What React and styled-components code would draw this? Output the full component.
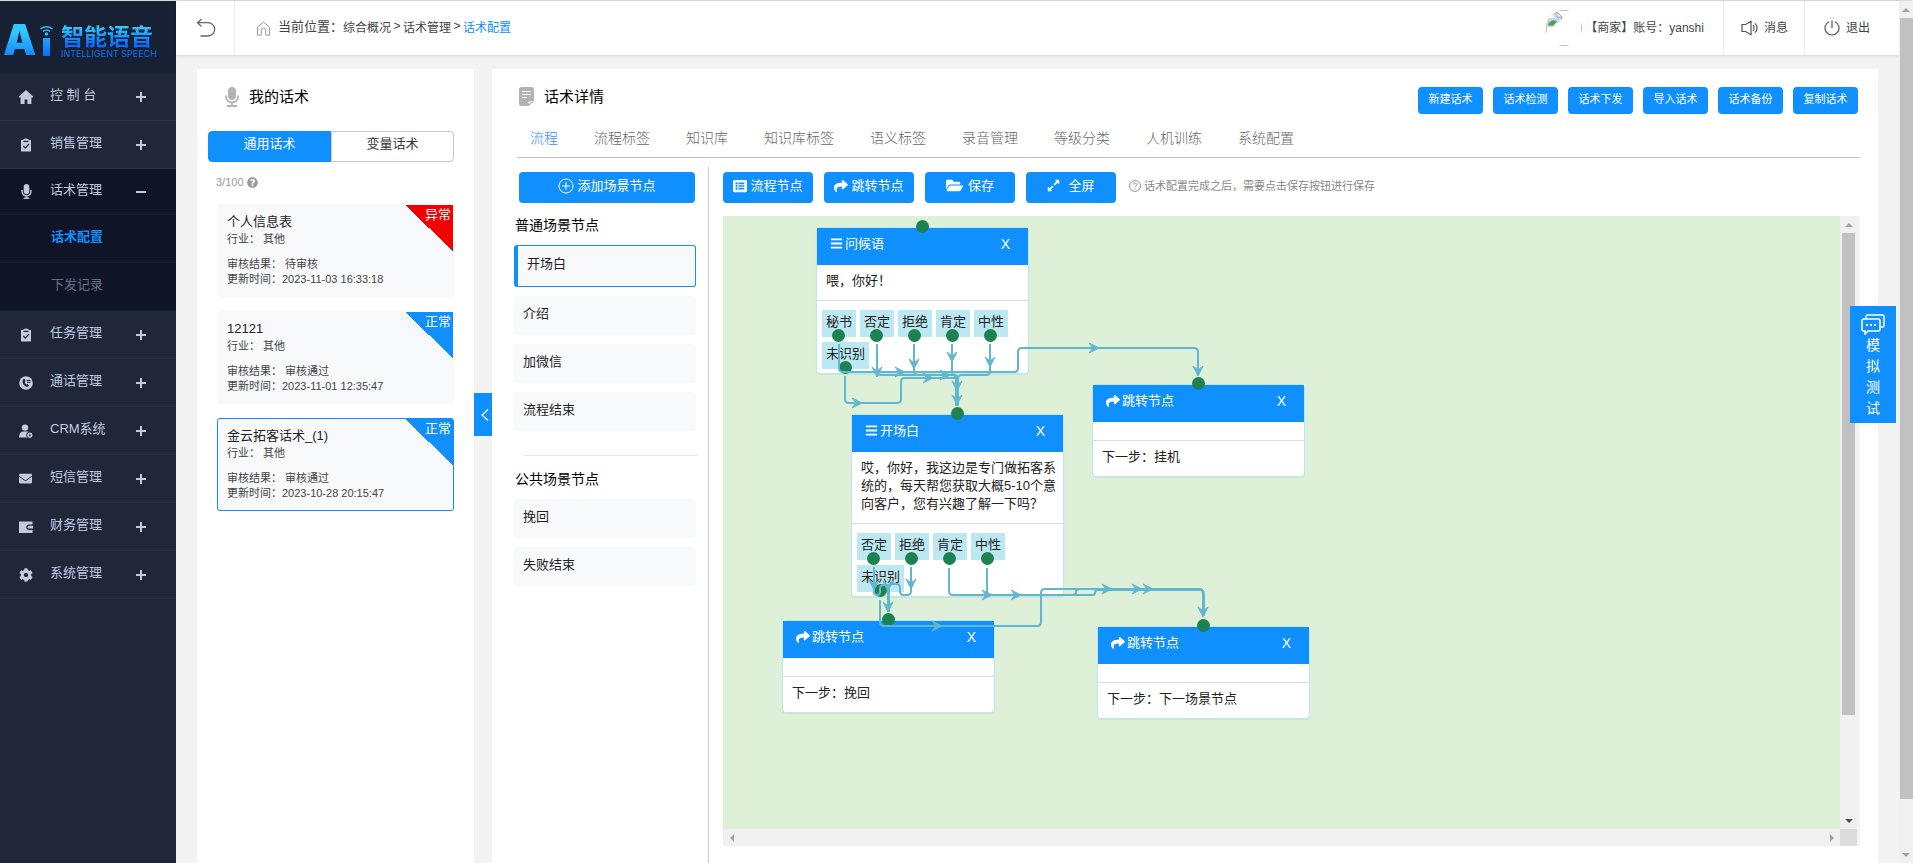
import React from "react";
import styled, { createGlobalStyle, css } from "styled-components";
import {
  FaBars,
  FaCog,
  FaEnvelope,
  FaExpandAlt,
  FaFolderOpen,
  FaListAlt,
  FaMicrophone,
  FaQuestionCircle,
  FaShare,
} from "react-icons/fa";

const BLUE = "#1090ff";
const LINK = "#61b7cf";
const DOT = "#1e8151";

const GlobalStyle = createGlobalStyle`
  *, *::before, *::after { box-sizing: border-box; }
  html, body { margin: 0; height: 100%; }
  body {
    font-family: "Liberation Sans", "Noto Sans CJK SC", sans-serif;
    font-size: 13px;
    line-height: 18px;
    color: #222;
    background: #f3f3f3;
    overflow: hidden;
  }
  button { font: inherit; border: 0; padding: 0; margin: 0; background: none; cursor: pointer; }
  a { color: inherit; text-decoration: none; }
  h1, h2, h3, p, ul { margin: 0; padding: 0; font-weight: 400; }
  ul { list-style: none; }
  svg { display: block; flex: none; }
`;

const Page = styled.div`
  display: flex;
  height: 100vh;
  border-top: 1px solid #dadada;
`;

/* ---------- sidebar ---------- */

const Sidebar = styled.aside`
  flex: none;
  width: 176px;
  background: #1f2739;
  color: #c3cbe0;
`;

const Logo = styled.div`
  display: flex;
  height: 72px;
  padding: 21px 0 0 3px;
  background: #182033;
`;

const gradientText = css`
  color: transparent;
  background: linear-gradient(#30c8ff 20%, #0a6cff 85%);
  background-clip: text;
  -webkit-background-clip: text;
`;

const LogoLetter = styled.span`
  ${gradientText}
  width: 37px;
  font: 900 42px/36px Inter, sans-serif;
`;

const LogoWords = styled.div`
  padding: 0 0 0 8px;
`;

const LogoName = styled.div`
  ${gradientText}
  font: 700 23px/26px "Noto Sans CJK SC", sans-serif;
`;

const LogoSub = styled.div`
  padding-top: 2px;
  color: #0f6fe8;
  font: 400 9px/8px Inter, sans-serif;
  white-space: nowrap;
`;

const NavItem = styled.button`
  display: grid;
  grid-template-columns: 14px 1fr 10px;
  column-gap: 17px;
  align-items: center;
  width: 100%;
  height: ${(p) => (p.$open ? 46 : 48)}px;
  padding: 0 30px 0 19px;
  text-align: left;
  color: inherit;
  background: ${(p) => (p.$open ? "#0f1526" : "transparent")};
  border-bottom: 1px solid ${(p) => (p.$open ? "#182033" : "#2a3243")};
`;

const NavLabel = styled.span`
  padding-bottom: 3px;
  white-space: nowrap;
`;

const SubLink = styled.a`
  display: block;
  height: 48px;
  padding: 0 0 0 51px;
  line-height: 44px;
  background: #0f1526;
  border-bottom: 1px solid #182033;
  color: ${(p) => (p.$active ? BLUE : "#66708a")};
  font-weight: ${(p) => (p.$active ? 700 : 400)};
`;

/* ---------- header ---------- */

const Main = styled.div`
  flex: 1;
  min-width: 0;
  display: flex;
  flex-direction: column;
`;

const Header = styled.header`
  display: flex;
  flex: none;
  height: 54px;
  background: #fff;
  box-shadow: 0 1px 3px rgba(0, 0, 0, 0.12);
  font-size: 12px;
  color: #444;
`;

const BackButton = styled.button`
  display: flex;
  align-items: center;
  width: 59px;
  padding-left: 20px;
  border-right: 1px solid #ececec;
`;

const Crumbs = styled.nav`
  display: flex;
  flex: 1;
  align-items: center;
  padding-left: 21px;
`;

const CrumbTitle = styled.span`
  padding: 0 0 2px 7px;
  font-size: 13px;
`;

const CrumbLink = styled.a`
  color: ${(p) => (p.$active ? BLUE : "inherit")};
`;

const CrumbArrow = styled.span`
  width: 12px;
  padding-bottom: 4px;
  text-align: center;
`;

const Account = styled.div`
  display: flex;
  align-items: center;
  gap: 3px;
  padding-right: 19px;
`;

const Avatar = styled.span`
  width: 36px;
  height: 36px;
  border-radius: 50%;
  overflow: hidden;
`;

const AvatarFrame = styled.span`
  display: block;
  height: 100%;
  border: 1px solid #b8b8b8;
`;

const HeaderAction = styled.button`
  display: flex;
  align-items: center;
  gap: 6px;
  padding: ${(p) => (p.$last ? "0 29px 0 19px" : "0 16px 0 17px")};
  border-left: 1px solid #ececec;
  color: inherit;
`;

/* ---------- panels ---------- */

const Content = styled.main`
  display: flex;
  flex: 1;
  min-height: 0;
  padding: 14px 21px 0;
`;

const ScriptPanel = styled.section`
  flex: none;
  width: 277px;
  padding: 18px 20px 0 11px;
  background: #fff;
`;

const PanelTitle = styled.h2`
  display: flex;
  gap: 10px;
  color: #000;
  font-size: 15px;
  line-height: 20px;
`;

const ScriptTitle = styled(PanelTitle)`
  padding-left: 17px;
`;

const Segments = styled.div`
  display: flex;
  height: 31px;
  margin-top: 24px;
`;

const Segment = styled.button`
  flex: 1;
  padding-bottom: 5px;
  border: 1px solid ${(p) => (p.$active ? BLUE : "#c8c8c8")};
  border-radius: ${(p) => (p.$active ? "4px 0 0 4px" : "0 4px 4px 0")};
  color: ${(p) => (p.$active ? "#fff" : "#333")};
  background: ${(p) => (p.$active ? BLUE : "#fff")};
`;

const Quota = styled.p`
  display: flex;
  align-items: center;
  gap: 3px;
  padding: 11px 0 13px 8px;
  color: #999;
  font-size: 11px;
`;

const CardList = styled.ul`
  display: grid;
  gap: 14px;
  padding-left: 9px;
`;

const Card = styled.li`
  position: relative;
  height: 93px;
  padding: 7px 9px;
  border: 1px solid ${(p) => (p.$active ? BLUE : "#f8f9fb")};
  border-radius: 3px;
  background: #f8f9fb;
  color: #444;
  font-size: 11px;
  line-height: 15px;
  white-space: pre;
`;

const CardTitle = styled.h3`
  font-size: 13px;
  line-height: 20px;
  color: #222;
`;

const CardField = styled.p`
  margin-top: ${(p) => (p.$spaced ? 10 : 0)}px;
`;

const Ribbon = styled.span`
  position: absolute;
  top: 0;
  right: 0;
  width: 48px;
  height: 46px;
  padding-right: 2px;
  color: #fff;
  font-size: 13px;
  line-height: 20px;
  text-align: right;
  background: linear-gradient(to top right, transparent 50%, ${(p) => p.$color} 50%);
`;

const Collapse = styled.button`
  display: flex;
  flex: none;
  align-items: center;
  justify-content: center;
  width: 18px;
  height: 43px;
  padding-left: 3px;
  margin-top: 324px;
  background: ${BLUE};
`;

const DetailPanel = styled.section`
  display: flex;
  flex: 1;
  flex-direction: column;
  min-width: 0;
  padding: 18px 18px 0 22px;
  background: #fff;
`;

const DetailHead = styled.div`
  display: flex;
  justify-content: space-between;
  height: 27px;
  padding: 0 2px 0 5px;
`;

const HeadActions = styled.div`
  display: flex;
  gap: 10px;
`;

const blueButton = css`
  color: #fff;
  background: ${BLUE};
  border-radius: 4px;
`;

const SmallButton = styled.button`
  ${blueButton}
  width: 65px;
  padding-bottom: 3px;
  font-size: 11px;
`;

const Tabs = styled.nav`
  display: flex;
  gap: 36px;
  margin-left: 3px;
  padding: 14px 0 9px 13px;
  border-bottom: 1px solid #c0c0c0;
  font-size: 14px;
  font-weight: 300;
  line-height: 20px;
`;

const Tab = styled.a`
  color: ${(p) => (p.$active ? "#3d8bff" : "#666")};
`;

const DetailBody = styled.div`
  display: flex;
  flex: 1;
  min-height: 0;
  padding-top: 9px;
`;

const SceneColumn = styled.div`
  flex: none;
  width: 195px;
  padding: 5px 12px 0 0;
  border-right: 1px solid #c8c8c8;
`;

const ToolButton = styled.button`
  ${blueButton}
  display: flex;
  align-items: center;
  justify-content: center;
  gap: ${(p) => p.$gap || 3}px;
  width: ${(p) => p.$width || "90px"};
  height: 31px;
  padding-bottom: 4px;
`;

const AddRow = styled.div`
  padding: 0 1px 0 5px;
`;

const SceneHeading = styled.h3`
  padding: ${(p) => (p.$first ? "12px 0 10px 1px" : "13px 0 10px 1px")};
  color: #000;
  font-size: 14px;
  line-height: 20px;
`;

const SceneList = styled.ul`
  display: grid;
  gap: 9px;
`;

const Scene = styled.li`
  height: ${(p) => (p.$active ? 42 : 39)}px;
  padding: 9px;
  border-radius: 3px;
  background: #f8f9fb;
  ${(p) =>
    p.$active &&
    css`
      border: 1px solid ${BLUE};
      border-left-width: 4px;
    `}
`;

const SceneDivider = styled.hr`
  height: 1px;
  margin: 24px -2px 0 10px;
  border: 0;
  background: #e6e6e6;
`;

const FlowColumn = styled.div`
  display: flex;
  flex: 1;
  flex-direction: column;
  min-width: 0;
  padding: 5px 0 17px 14px;
`;

const Toolbar = styled.div`
  display: flex;
  align-items: center;
  gap: 11px;
  padding-bottom: 13px;
`;

const Hint = styled.p`
  display: flex;
  align-items: center;
  gap: 3px;
  padding: 0 0 3px 2px;
  color: #888;
  font-size: 11px;
`;

/* ---------- flow canvas ---------- */

const CanvasFrame = styled.div`
  display: grid;
  flex: 1;
  grid-template-columns: 1fr 17px;
  grid-template-rows: 1fr 17px;
  min-height: 0;
  padding-right: 3px;
  background: linear-gradient(#f3f3f3, #f3f3f3) right / 3px 100% no-repeat;
`;

const Canvas = styled.div`
  position: relative;
  overflow: hidden;
  background: #def0d8;
`;

const Corner = styled.div`
  background: #dcdcdc;
`;

const FlowNode = styled.article`
  position: absolute;
  left: ${(p) => p.$x}px;
  top: ${(p) => p.$y}px;
  width: 213px;
  border: 1px solid #bce8f1;
  border-radius: 4px;
  background: #fff;
  box-shadow: 0 1px 1px rgba(0, 0, 0, 0.05);

  &::before {
    content: "";
    position: absolute;
    top: -8px;
    left: 99px;
    width: 13px;
    height: 13px;
    border-radius: 50%;
    background: ${DOT};
  }
`;

const NodeHead = styled.header`
  display: flex;
  align-items: center;
  gap: 2px;
  height: 37px;
  padding: 0 18px 6px 13px;
  color: #fff;
  background: ${BLUE};
`;

const NodeClose = styled.button`
  margin-left: auto;
  color: #fff;
  font-size: 14px;
`;

const NodeText = styled.p`
  min-height: 18px;
  padding: ${(p) => (p.$empty ? 0 : "7px 4px 10px 9px")};
  & + & {
    border-top: 1px solid #dcdcdc;
  }
`;

const Tags = styled.ul`
  display: flex;
  flex-wrap: wrap;
  gap: 5px 4px;
  padding: 9px 9px 4px 5px;
  border-top: 1px solid #dcdcdc;
`;

const Tag = styled.li`
  position: relative;
  height: 27px;
  padding: 0 4px;
  line-height: 24px;
  background: #bce8f1;

  &::after {
    content: "";
    position: absolute;
    bottom: -5px;
    left: calc(50% - 7px);
    width: 13px;
    height: 13px;
    border-radius: 50%;
    background: ${DOT};
  }
`;

const Wires = styled.svg`
  position: absolute;
  inset: 0;
  width: 100%;
  height: 100%;
  pointer-events: none;
`;

/* ---------- scroll bars ---------- */

const Track = styled.div`
  display: flex;
  flex: none;
  flex-direction: ${(p) => (p.$row ? "row" : "column")};
  justify-content: space-between;
  align-items: center;
  width: ${(p) => p.$width || "auto"};
  overflow: hidden;
  background: #f0f0f0;
`;

const TrackEnd = styled.span`
  display: flex;
  flex: none;
  align-items: center;
  justify-content: center;
  width: 17px;
  height: 17px;
`;

const Thumb = styled.span`
  flex: none;
  width: 13px;
  height: ${(p) => p.$length};
  margin: 0 2px auto;
  background: #c1c1c1;
`;

const TestButton = styled.button`
  position: fixed;
  top: 306px;
  right: 17px;
  display: flex;
  flex-direction: column;
  align-items: center;
  width: 46px;
  height: 117px;
  padding-top: 8px;
  color: #fff;
  background: ${BLUE};
  font-size: 14px;
  line-height: 21px;
`;

const TestLabel = styled.span`
  width: 14px;
`;

/* ---------- drawings ---------- */

const Arrow = ({ dir, color = "#a3a3a3" }) => {
  const d = {
    up: "M4 0 8 4H0z",
    down: "M0 0h8L4 4z",
    left: "M4 0v8L0 4z",
    right: "M0 0l4 4-4 4z",
  }[dir];
  const tall = dir === "left" || dir === "right";
  return (
    <svg width={tall ? 4 : 8} height={tall ? 8 : 4} fill={color}>
      <path d={d} />
    </svg>
  );
};

const LogoSignal = () => (
  <svg width="13" height="34" viewBox="0 0 13 34" fill="none">
    <defs>
      <linearGradient id="signal" x1="0" y1="4" x2="0" y2="34" gradientUnits="userSpaceOnUse">
        <stop offset="0" stopColor="#30c8ff" />
        <stop offset="1" stopColor="#0a6cff" />
      </linearGradient>
    </defs>
    <rect x="3" y="16" width="7" height="18" fill="url(#signal)" />
    <circle cx="6.500" cy="12" r="1.800" fill="#2bbcff" />
    <path d="M3 9.500c2-2 5-2 7 0M.5 7c3.500-3 8.500-3 12 0" stroke="#2bbcff" strokeWidth="1.500" />
  </svg>
);

const HomeSolid = () => (
  <svg width="14" height="14" viewBox="0 0 14 14" fill="currentColor">
    <path d="M7 0 0 6.600v.9h1.600V14h4V9.500h2.800V14h4V7.500H14v-.9z" />
  </svg>
);

const HomeLine = () => (
  <svg width="15" height="15" viewBox="0 0 15 15" fill="none" stroke="#999">
    <path d="M1.500 6.200 7.500 1l6 5.200v8H9.700V9.300a2.200 2.200 0 0 0-4.400 0v4.900H1.500z" />
  </svg>
);

const Clipboard = () => (
  <svg width="14" height="14" viewBox="0 0 14 14">
    <path d="M2 2h2.500V1h1C5.800.2 8.200.2 8.500 1h1v1H12v11.500H2z" fill="currentColor" />
    <path d="M4.500 3.300h5M4.300 8l2 2.200L10 6" fill="none" stroke="#1f2739" strokeWidth="1.200" />
  </svg>
);

const PhoneDisc = () => (
  <svg width="14" height="14" viewBox="0 0 14 14">
    <circle cx="7" cy="7" r="6.800" fill="currentColor" />
    <path
      d="M4.200 3.200c-1.500 2-.5 6.500 4 7.800l2-1.200-1.600-1.900-1.200.5C6.200 7.700 5.800 6.800 5.800 6l.8-.8-.7-2.300z"
      fill="#1f2739"
    />
    <path d="M7.500 4.500h4M8 6.300h3.500" stroke="#1f2739" />
  </svg>
);

const UserCog = () => (
  <svg width="14" height="14" viewBox="0 0 14 14">
    <circle cx="6" cy="3.600" r="3.200" fill="currentColor" />
    <path d="M0 13.500c0-4 1.500-6 4-6h4c2 0 3.300 1.200 3.700 3V13.500z" fill="currentColor" />
    <circle cx="10.800" cy="11.200" r="3.200" fill="currentColor" stroke="#1f2739" />
    <circle cx="10.800" cy="11.200" r="1" fill="#1f2739" />
  </svg>
);

const Wallet = () => (
  <svg width="14" height="14" viewBox="0 0 14 14" fill="currentColor">
    <path d="M0 1.500h13.500v3H10a2.700 2.700 0 0 0 0 5.400h3.500V13H0z" />
    <path d="M10 5.800h4v2.800h-4a1.400 1.400 0 0 1 0-2.800z" />
  </svg>
);

const BackArrow = () => (
  <svg width="20" height="20" viewBox="0 0 20 20" fill="none" stroke="#666" strokeWidth="1.300">
    <path d="M5.500 1 1.500 4.700l4 3.800M1.500 4.700H12a6.600 6.600 0 0 1 0 13.300H4.500" />
  </svg>
);

const BrokenImage = () => (
  <svg width="16" height="16" viewBox="0 0 16 16">
    <path d="M1 1h9l5 5v9H1z" fill="#c7d8f5" stroke="#9aa7bd" />
    <path d="M10 1v5h5z" fill="#fff" stroke="#9aa7bd" />
    <ellipse cx="5" cy="5.500" rx="2.500" ry="1.500" fill="#fff" />
    <path d="M1.500 14.500V13c2-4 5.500-5 8.500-2.500l-4 4z" fill="#4fa53a" />
    <path d="M6 16 16 7v9z" fill="#fff" />
  </svg>
);

const Speaker = () => (
  <svg width="17" height="16" viewBox="0 0 17 16" fill="none" stroke="#555" strokeWidth="1.200">
    <path d="M1 4.500h3.500L10 1.200v13.600L4.500 11.500H1zM12 5.200c1.300 1.700 1.300 3.900 0 5.600M14 3.300c2.500 2.800 2.500 6.600 0 9.400" />
  </svg>
);

const Power = () => (
  <svg width="16" height="16" viewBox="0 0 16 16" fill="none" stroke="#555" strokeWidth="1.200">
    <path d="M8 .5v7.500M5 1.700a7 7 0 1 0 6 0" />
  </svg>
);

const NoteIcon = () => (
  <svg width="15" height="19" viewBox="0 0 15 19">
    <path
      d="M2.500 0h10A2.500 2.500 0 0 1 15 2.500V14l-5 5H2.500A2.500 2.500 0 0 1 0 16.500v-14A2.500 2.500 0 0 1 2.500 0z"
      fill="#b3b3b3"
    />
    <path d="M9.500 17.500v-2a1.500 1.500 0 0 1 1.500-1.500h2.500z" fill="#fff" />
    <path d="M3 4.500h9M3 7.500h9M3 10.500h5" stroke="#fff" />
  </svg>
);

const MicIcon = () => (
  <svg width="14" height="20" viewBox="0 0 14 20" fill="none" stroke="#b3b3b3">
    <rect x="3" y="0" width="8" height="13" rx="4" fill="#b3b3b3" stroke="none" />
    <path d="M1 8.500v1.500a6 5.500 0 0 0 12 0V8.500M7 15.500V19M2 19h10" strokeWidth="1.800" />
  </svg>
);

const PlusRing = () => (
  <svg width="16" height="16" viewBox="0 0 16 16" fill="none" stroke="#fff">
    <circle cx="8" cy="8" r="7" />
    <path d="M8 4v8M4 8h8" />
  </svg>
);

const QuestionRing = () => (
  <svg width="12" height="12" viewBox="0 0 12 12" fill="none" stroke="#888">
    <circle cx="6" cy="6" r="5.400" strokeWidth=".9" />
    <path d="M4.300 4.700c0-2.200 3.500-2.200 3.500 0C7.800 6 6 6 6 7.300M6 8.400v1" strokeWidth=".9" />
  </svg>
);

const ChatIcon = () => (
  <svg width="24" height="21" viewBox="0 0 24 21" fill="none" stroke="#fff" strokeWidth="1.500">
    <path d="M5 4V2.500A1.500 1.500 0 0 1 6.500 1h15A1.500 1.500 0 0 1 23 2.500v9a1.500 1.500 0 0 1-1.500 1.500H20" />
    <path d="M2.500 5h15A1.500 1.500 0 0 1 19 6.500v9a1.500 1.500 0 0 1-1.500 1.500H7l-3 3v-3H2.500A1.500 1.500 0 0 1 1 15.500v-9A1.500 1.500 0 0 1 2.500 5z" />
    <path d="M5 11h2M9 11h2M13 11h2" strokeWidth="2" />
  </svg>
);

const Chevron = () => (
  <svg width="8" height="12" viewBox="0 0 8 12" fill="none" stroke="#fff" strokeWidth="1.200">
    <path d="M7 .5 1 6l6 5.500" />
  </svg>
);

const Sign = ({ minus }) => (
  <svg width="10" height="10" stroke="currentColor" strokeWidth="2">
    <path d={minus ? "M0 5h10" : "M0 5h10M5 0v10"} />
  </svg>
);

/* ---------- data ---------- */

const MENU = [
  { label: "控 制 台", icon: <HomeSolid /> },
  { label: "销售管理", icon: <Clipboard /> },
  { label: "话术管理", icon: <FaMicrophone size={15} />, children: ["话术配置", "下发记录"] },
  { label: "任务管理", icon: <Clipboard /> },
  { label: "通话管理", icon: <PhoneDisc /> },
  { label: "CRM系统", icon: <UserCog /> },
  { label: "短信管理", icon: <FaEnvelope size={13} /> },
  { label: "财务管理", icon: <Wallet /> },
  { label: "系统管理", icon: <FaCog size={14} /> },
];

const SCRIPTS = [
  { name: "个人信息表", result: "待审核", time: "2023-11-03 16:33:18", state: "异常", color: "#f50000" },
  { name: "12121", result: "审核通过", time: "2023-11-01 12:35:47", state: "正常", color: BLUE },
  { name: "金云拓客话术_(1)", result: "审核通过", time: "2023-10-28 20:15:47", state: "正常", color: BLUE, active: true },
];

const HEAD_ACTIONS = ["新建话术", "话术检测", "话术下发", "导入话术", "话术备份", "复制话术"];
const TABS = ["流程", "流程标签", "知识库", "知识库标签", "语义标签", "录音管理", "等级分类", "人机训练", "系统配置"];
const SCENES = ["开场白", "介绍", "加微信", "流程结束"];
const SHARED_SCENES = ["挽回", "失败结束"];

const NODES = [
  { x: 93, y: 11, title: "问候语", text: "喂，你好！", tags: ["秘书", "否定", "拒绝", "肯定", "中性", "未识别"] },
  {
    x: 128,
    y: 198,
    title: "开场白",
    text: "哎，你好，我这边是专门做拓客系统的，每天帮您获取大概5-10个意向客户，您有兴趣了解一下吗？",
    tags: ["否定", "拒绝", "肯定", "中性", "未识别"],
  },
  { x: 369, y: 168, title: "跳转节点", next: "挂机" },
  { x: 59, y: 404, title: "跳转节点", next: "挽回" },
  { x: 374, y: 410, title: "跳转节点", next: "下一场景节点" },
];

const ROUTES = [
  [[116, 128], [116, 156], [295, 156], [295, 132], [475, 132], [475, 160]],
  [[154, 128], [154, 159], [233, 159], [233, 190]],
  [[191, 128], [191, 159], [234, 159], [234, 190]],
  [[229, 128], [229, 159], [234, 159], [234, 190]],
  [[267, 128], [267, 159], [235, 159], [235, 190]],
  [[122, 160], [122, 187], [178, 187], [178, 162], [235, 162], [235, 190]],
  [[151, 351], [151, 379], [157, 379], [157, 369], [165, 369], [165, 396]],
  [[188, 351], [188, 379], [177, 379], [177, 368], [166, 368], [166, 396]],
  [[226, 352], [226, 379], [353, 379], [353, 373], [480, 373], [480, 400]],
  [[264, 352], [264, 379], [372, 379], [372, 374], [481, 374], [481, 400]],
  [[157, 384], [157, 410], [318, 410], [318, 373], [480, 373], [480, 400]],
];

const HEADS = [
  [177, 156, 0], [371, 132, 0], [475, 155, 90], [205, 162, 0], [222, 159, 0],
  [154, 156, 90], [191, 148, 90], [229, 141, 90], [267, 146, 90], [134, 187, 0],
  [234, 170, 90], [234, 184, 90], [151, 369, 90], [188, 368, 90], [165, 370, 90],
  [165, 391, 90], [264, 379, 0], [293, 379, 0], [214, 410, 0], [384, 373, 0],
  [414, 373, 0], [425, 373, 0], [480, 396, 90],
];

// Joins the points with straight runs and rounds every inner corner.
function route(points) {
  let d = `M${points[0].join(" ")}`;
  for (let i = 1; i < points.length - 1; i += 1) {
    const [px, py] = points[i - 1];
    const [x, y] = points[i];
    const [nx, ny] = points[i + 1];
    const before = Math.abs(x - px) + Math.abs(y - py);
    const after = Math.abs(nx - x) + Math.abs(ny - y);
    const r = Math.min(4, before / 2, after / 2);
    const sx = x - Math.sign(x - px) * r;
    const sy = y - Math.sign(y - py) * r;
    const ex = x + Math.sign(nx - x) * r;
    const ey = y + Math.sign(ny - y) * r;
    d += `L${sx} ${sy}Q${x} ${y} ${ex} ${ey}`;
  }
  return `${d}L${points[points.length - 1].join(" ")}`;
}

/* ---------- parts ---------- */

const VerticalScroll = ({ width, length, endColor }) => (
  <Track $width={width}>
    <TrackEnd>
      <Arrow dir="up" />
    </TrackEnd>
    <Thumb $length={length} />
    <TrackEnd>
      <Arrow dir="down" color={endColor} />
    </TrackEnd>
  </Track>
);

const Node = ({ x, y, title, text, tags, next }) => (
  <FlowNode $x={x} $y={y}>
    <NodeHead>
      {tags ? <FaBars size={13} /> : <FaShare size={14} />}
      <span>{title}</span>
      <NodeClose aria-label="关闭">X</NodeClose>
    </NodeHead>
    <NodeText $empty={!text}>{text}</NodeText>
    {tags ? (
      <Tags>
        {tags.map((tag) => (
          <Tag key={tag}>{tag}</Tag>
        ))}
      </Tags>
    ) : (
      <NodeText>下一步：{next}</NodeText>
    )}
  </FlowNode>
);

export default function App() {
  return (
    <>
      <GlobalStyle />
      <Page>
        <Sidebar>
          <Logo>
            <LogoLetter>A</LogoLetter>
            <LogoSignal />
            <LogoWords>
              <LogoName>智能语音</LogoName>
              <LogoSub>INTELLIGENT SPEECH</LogoSub>
            </LogoWords>
          </Logo>
          <nav>
            {MENU.map((item) => (
              <React.Fragment key={item.label}>
                <NavItem $open={Boolean(item.children)}>
                  {item.icon}
                  <NavLabel>{item.label}</NavLabel>
                  <Sign minus={Boolean(item.children)} />
                </NavItem>
                {item.children?.map((child, i) => (
                  <SubLink key={child} href="#" $active={i === 0}>
                    {child}
                  </SubLink>
                ))}
              </React.Fragment>
            ))}
          </nav>
        </Sidebar>

        <Main>
          <Header>
            <BackButton aria-label="返回">
              <BackArrow />
            </BackButton>
            <Crumbs>
              <HomeLine />
              <CrumbTitle>当前位置：</CrumbTitle>
              <CrumbLink href="#">综合概况</CrumbLink>
              <CrumbArrow>&gt;</CrumbArrow>
              <CrumbLink href="#">话术管理</CrumbLink>
              <CrumbArrow>&gt;</CrumbArrow>
              <CrumbLink href="#" $active>
                话术配置
              </CrumbLink>
            </Crumbs>
            <Account>
              <Avatar>
                <AvatarFrame>
                  <BrokenImage />
                </AvatarFrame>
              </Avatar>
              <span>【商家】账号：yanshi</span>
            </Account>
            <HeaderAction>
              <Speaker />
              消息
            </HeaderAction>
            <HeaderAction $last>
              <Power />
              退出
            </HeaderAction>
          </Header>

          <Content>
            <ScriptPanel>
              <ScriptTitle>
                <MicIcon />
                我的话术
              </ScriptTitle>
              <Segments>
                <Segment $active>通用话术</Segment>
                <Segment>变量话术</Segment>
              </Segments>
              <Quota>
                3/100 <FaQuestionCircle size={11} />
              </Quota>
              <CardList>
                {SCRIPTS.map((s) => (
                  <Card key={s.name} $active={s.active}>
                    <CardTitle>{s.name}</CardTitle>
                    <CardField>行业： 其他</CardField>
                    <CardField $spaced>审核结果： {s.result}</CardField>
                    <CardField>更新时间：{s.time}</CardField>
                    <Ribbon $color={s.color}>{s.state}</Ribbon>
                  </Card>
                ))}
              </CardList>
            </ScriptPanel>

            <Collapse aria-label="收起">
              <Chevron />
            </Collapse>

            <DetailPanel>
              <DetailHead>
                <PanelTitle>
                  <NoteIcon />
                  话术详情
                </PanelTitle>
                <HeadActions>
                  {HEAD_ACTIONS.map((label) => (
                    <SmallButton key={label}>{label}</SmallButton>
                  ))}
                </HeadActions>
              </DetailHead>
              <Tabs>
                {TABS.map((label, i) => (
                  <Tab key={label} href="#" $active={i === 0}>
                    {label}
                  </Tab>
                ))}
              </Tabs>

              <DetailBody>
                <SceneColumn>
                  <AddRow>
                    <ToolButton $width="100%">
                      <PlusRing />
                      添加场景节点
                    </ToolButton>
                  </AddRow>
                  <SceneHeading $first>普通场景节点</SceneHeading>
                  <SceneList>
                    {SCENES.map((label, i) => (
                      <Scene key={label} $active={i === 0}>
                        {label}
                      </Scene>
                    ))}
                  </SceneList>
                  <SceneDivider />
                  <SceneHeading>公共场景节点</SceneHeading>
                  <SceneList>
                    {SHARED_SCENES.map((label) => (
                      <Scene key={label}>{label}</Scene>
                    ))}
                  </SceneList>
                </SceneColumn>

                <FlowColumn>
                  <Toolbar>
                    <ToolButton>
                      <FaListAlt size={14} />
                      流程节点
                    </ToolButton>
                    <ToolButton>
                      <FaShare size={14} />
                      跳转节点
                    </ToolButton>
                    <ToolButton $gap={5}>
                      <FaFolderOpen size={17} />
                      保存
                    </ToolButton>
                    <ToolButton $gap={8}>
                      <FaExpandAlt size={13} />
                      全屏
                    </ToolButton>
                    <Hint>
                      <QuestionRing />
                      话术配置完成之后，需要点击保存按钮进行保存
                    </Hint>
                  </Toolbar>

                  <CanvasFrame>
                    <Canvas>
                      {NODES.map((node) => (
                        <Node key={`${node.x}-${node.y}`} {...node} />
                      ))}
                      <Wires fill="none">
                        {ROUTES.map((points, i) => (
                          <path key={i} d={route(points)} stroke={LINK} strokeWidth="2" />
                        ))}
                        {HEADS.map(([x, y, angle], i) => (
                          <path
                            key={i}
                            d="M5 0-5 5-1 0-5-5z"
                            transform={`translate(${x} ${y}) rotate(${angle})`}
                            fill={LINK}
                            stroke={LINK}
                          />
                        ))}
                      </Wires>
                    </Canvas>
                    <VerticalScroll length="482px" endColor="#505050" />
                    <Track $row>
                      <TrackEnd>
                        <Arrow dir="left" />
                      </TrackEnd>
                      <TrackEnd>
                        <Arrow dir="right" />
                      </TrackEnd>
                    </Track>
                    <Corner />
                  </CanvasFrame>
                </FlowColumn>
              </DetailBody>
            </DetailPanel>
          </Content>
        </Main>

        <VerticalScroll width="14px" length="781px" />
        <TestButton>
          <ChatIcon />
          <TestLabel>模拟测试</TestLabel>
        </TestButton>
      </Page>
    </>
  );
}
